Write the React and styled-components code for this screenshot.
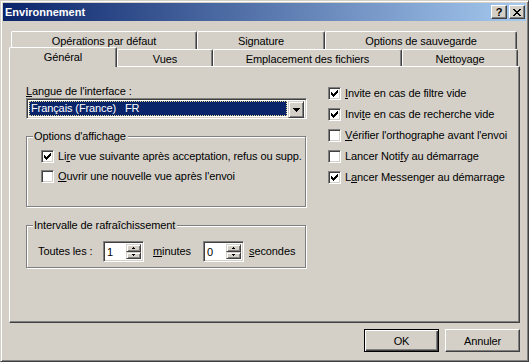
import React from "react";
import styled, { createGlobalStyle, css } from "styled-components";

const FACE = "#d4d0c8";

const backTabs = [
  { label: "Opérations par défaut", width: 186 },
  { label: "Signature", width: 128 },
  { label: "Options de sauvegarde", width: 192 },
];

const frontTabs = [
  { label: "Général", width: 108, active: true },
  { label: "Vues", width: 96 },
  { label: "Emplacement des fichiers", width: 189 },
  { label: "Nettoyage", width: 116 },
];

const rightOptions = [
  { pre: "", key: "I", post: "nvite en cas de filtre vide", checked: true },
  { pre: "Invi", key: "t", post: "e en cas de recherche vide", checked: true },
  { pre: "", key: "V", post: "érifier l'orthographe avant l'envoi", checked: false },
  { pre: "Lancer Noti", key: "f", post: "y au démarrage", checked: false },
  { pre: "L", key: "a", post: "ncer Messenger au démarrage", checked: true },
];

const GlobalStyle = createGlobalStyle`
  html, body {
    margin: 0;
    padding: 0;
    background: ${FACE};
  }
  body {
    font-family: "Liberation Sans", Arial, sans-serif;
    font-size: 11px;
    letter-spacing: -0.1px;
    color: #000;
  }
`;

const raised = css`
  border: 1px solid;
  border-color: #fff #404040 #404040 #fff;
  box-shadow: inset -1px -1px #808080;
`;

const sunken = css`
  border: 1px solid;
  border-color: #808080 #fff #fff #808080;
  box-shadow: inset 1px 1px #404040, inset -1px -1px ${FACE};
`;

const Window = styled.div`
  box-sizing: border-box;
  width: 529px;
  height: 362px;
  padding: 2px;
  background: ${FACE};
  border: 1px solid;
  border-color: ${FACE} #404040 #404040 ${FACE};
  box-shadow: inset 1px 1px #fff, inset -1px -1px #808080;
  display: flex;
  flex-direction: column;
`;

const TitleBar = styled.div`
  height: 18px;
  flex: none;
  display: flex;
  align-items: center;
  padding: 0 1px 0 2px;
  background: linear-gradient(to right, #0a246a, #a6caf0);
`;

const Title = styled.span`
  flex: 1;
  color: #fff;
  font-weight: bold;
  font-size: 11px;
  letter-spacing: 0;
  line-height: 18px;
`;

const TitleButton = styled.div`
  box-sizing: border-box;
  width: 16px;
  height: 14px;
  margin-left: 2px;
  background: ${FACE};
  ${raised};
  display: flex;
  align-items: center;
  justify-content: center;
  font-weight: bold;
  font-size: 11px;
  line-height: 12px;
`;

const Body = styled.div`
  flex: 1;
  display: flex;
  flex-direction: column;
  padding: 10px 6px 0 6px;
`;

const TabRow = styled.div`
  display: flex;
  align-items: flex-start;
  height: ${(p) => p.$h}px;
  padding-left: ${(p) => p.$indent}px;
`;

const Tab = styled.div`
  box-sizing: border-box;
  flex: none;
  width: ${(p) => p.$w}px;
  height: ${(p) => (p.$active ? p.$h + 3 : p.$h)}px;
  margin-top: ${(p) => (p.$active ? -2 : 0)}px;
  position: ${(p) => (p.$active ? "relative" : "static")};
  z-index: ${(p) => (p.$active ? 1 : 0)};
  background: ${FACE};
  border-top: 1px solid #fff;
  border-left: 1px solid #fff;
  border-right: 1px solid #404040;
  border-radius: 2px 2px 0 0;
  box-shadow: inset -1px 0 #808080;
  text-align: center;
  line-height: 13px;
  padding-top: 3px;
  white-space: nowrap;
`;

const Panel = styled.div`
  box-sizing: border-box;
  width: 511px;
  height: 257px;
  border: 1px solid;
  border-color: #fff #404040 #404040 #fff;
  box-shadow: inset -1px -1px #808080;
  display: flex;
  padding: 18px 0 0 16px;
  gap: 21px;
`;

const LeftCol = styled.div`
  width: 281px;
  display: flex;
  flex-direction: column;
`;

const RightCol = styled.div`
  display: flex;
  flex-direction: column;
  gap: 8px;
  padding-top: 2px;
`;

const Label = styled.div`
  line-height: 13px;
  height: 13px;
  white-space: nowrap;
`;

const Key = styled.span`
  text-decoration: underline;
`;

const Combo = styled.div`
  box-sizing: border-box;
  width: 281px;
  height: 21px;
  ${sunken};
  background: #fff;
  padding: 2px;
  display: flex;
`;

const Selection = styled.div`
  flex: 1;
  margin-right: 1px;
  background: #0a246a;
  color: #fff;
  line-height: 15px;
  padding-left: 2px;
  outline: 1px dotted #e8d890;
  outline-offset: -1px;
  white-space: pre;
`;

const DropButton = styled.div`
  box-sizing: border-box;
  width: 16px;
  height: 17px;
  background: ${FACE};
  border: 1px solid;
  border-color: ${FACE} #404040 #404040 ${FACE};
  box-shadow: inset 1px 1px #fff, inset -1px -1px #808080;
  display: flex;
  align-items: center;
  justify-content: center;
`;

const Group = styled.div`
  box-sizing: border-box;
  position: relative;
  width: 280px;
  height: ${(p) => p.$h}px;
  margin-top: ${(p) => p.$mt}px;
  border: 1px solid #808080;
  box-shadow: inset 1px 1px #fff, 1px 1px #fff;
  padding: ${(p) => p.$pad};
  display: flex;
  flex-direction: column;
  gap: 7px;
`;

const Legend = styled.span`
  position: absolute;
  top: -7px;
  left: 6px;
  padding: 0 2px 0 1px;
  background: ${FACE};
  line-height: 13px;
  white-space: nowrap;
`;

const CheckRow = styled.div`
  display: flex;
  align-items: center;
  height: 13px;
  gap: 4px;
  white-space: nowrap;
  line-height: 13px;
`;

const Box = styled.div`
  box-sizing: border-box;
  flex: none;
  width: 13px;
  height: 13px;
  ${sunken};
  background: #fff;
  position: relative;
`;

const CheckMark = styled.svg`
  position: absolute;
  left: 1px;
  top: 1px;
  display: block;
`;

const SpinRow = styled.div`
  display: flex;
  align-items: center;
  height: 21px;
  white-space: nowrap;
`;

const Cell = styled.div`
  flex: none;
  width: ${(p) => p.$w}px;
  margin-left: ${(p) => p.$ml || 0}px;
  line-height: 13px;
`;

const Spin = styled.div`
  box-sizing: border-box;
  flex: none;
  width: 41px;
  height: 21px;
  ${sunken};
  background: #fff;
  padding: 2px;
  display: flex;
`;

const SpinValue = styled.div`
  flex: 1;
  line-height: 16px;
  padding-left: 1px;
`;

const SpinButtons = styled.div`
  width: 15px;
  display: flex;
  flex-direction: column;
`;

const SpinBtn = styled.div`
  box-sizing: border-box;
  height: ${(p) => p.$h}px;
  background: ${FACE};
  border: 1px solid;
  border-color: ${FACE} #404040 #404040 ${FACE};
  box-shadow: inset 1px 1px #fff, inset -1px -1px #808080;
  display: flex;
  align-items: center;
  justify-content: center;
`;

const ButtonRow = styled.div`
  display: flex;
  justify-content: flex-end;
  gap: 6px;
  margin-top: 6px;
`;

const Button = styled.div`
  box-sizing: border-box;
  width: 75px;
  height: 23px;
  display: flex;
  align-items: center;
  justify-content: center;
  background: ${FACE};
  ${(p) =>
    p.$default
      ? css`
          border: 1px solid #000;
          box-shadow: inset 1px 1px #fff, inset -1px -1px #404040,
            inset -2px -2px #808080;
        `
      : raised};
`;

const Check = ({ checked }) => (
  <Box>
    {checked && (
      <CheckMark width="9" height="9" viewBox="0 0 9 9" shapeRendering="crispEdges">
        {[2, 3, 4, 3, 2, 1, 0].map((r, i) => (
          <rect key={i} x={1 + i} y={1 + r} width="1" height="3" fill="#000" />
        ))}
      </CheckMark>
    )}
  </Box>
);

// little black triangle, `size` rows tall
const Arrow = ({ size, up }) => (
  <svg width={size * 2 - 1} height={size} viewBox={`0 0 ${size * 2 - 1} ${size}`} shapeRendering="crispEdges">
    {Array.from({ length: size }).map((_, i) => {
      const row = up ? size - 1 - i : i;
      return <rect key={i} x={i} y={row} width={size * 2 - 1 - i * 2} height="1" fill="#000" />;
    })}
  </svg>
);

const CloseGlyph = () => (
  <svg width="8" height="7" viewBox="0 0 8 7" shapeRendering="crispEdges">
    {[0, 1, 2, 3, 4, 5, 6].map((i) => (
      <g key={i}>
        <rect x={i} y={i} width="2" height="1" fill="#000" />
        <rect x={6 - i} y={i} width="2" height="1" fill="#000" />
      </g>
    ))}
  </svg>
);

const Spinner = ({ value }) => (
  <Spin>
    <SpinValue>{value}</SpinValue>
    <SpinButtons>
      <SpinBtn $h={9}>
        <Arrow size={2} up />
      </SpinBtn>
      <SpinBtn $h={8}>
        <Arrow size={2} />
      </SpinBtn>
    </SpinButtons>
  </Spin>
);

export default function App() {
  return (
    <>
      <GlobalStyle />
      <Window>
        <TitleBar>
          <Title>Environnement</Title>
          <TitleButton>?</TitleButton>
          <TitleButton>
            <CloseGlyph />
          </TitleButton>
        </TitleBar>
        <Body>
          <TabRow $h={18} $indent={2}>
            {backTabs.map((t) => (
              <Tab key={t.label} $w={t.width} $h={18}>
                {t.label}
              </Tab>
            ))}
          </TabRow>
          <TabRow $h={17} $indent={0}>
            {frontTabs.map((t) => (
              <Tab key={t.label} $w={t.width} $h={17} $active={t.active}>
                {t.label}
              </Tab>
            ))}
          </TabRow>
          <Panel>
            <LeftCol>
              <Label>
                <Key>L</Key>angue de l'interface :
              </Label>
              <Combo>
                <Selection>Français (France)   FR</Selection>
                <DropButton>
                  <Arrow size={4} />
                </DropButton>
              </Combo>
              <Group $h={71} $mt={17} $pad="13px 0 0 14px">
                <Legend>Options d'affichage</Legend>
                <CheckRow>
                  <Check checked />
                  <span>
                    Li<Key>r</Key>e vue suivante après acceptation, refus ou supp.
                  </span>
                </CheckRow>
                <CheckRow>
                  <Check />
                  <span>
                    <Key>O</Key>uvrir une nouvelle vue après l'envoi
                  </span>
                </CheckRow>
              </Group>
              <Group $h={43} $mt={18} $pad="15px 0 0 11px">
                <Legend>Intervalle de rafraîchissement</Legend>
                <SpinRow>
                  <Cell $w={65}>Toutes les :</Cell>
                  <Spinner value="1" />
                  <Cell $w={50} $ml={9}>
                    <Key>m</Key>inutes
                  </Cell>
                  <Spinner value="0" />
                  <Cell $w={60} $ml={5}>
                    <Key>s</Key>econdes
                  </Cell>
                </SpinRow>
              </Group>
            </LeftCol>
            <RightCol>
              {rightOptions.map((o) => (
                <CheckRow key={o.post}>
                  <Check checked={o.checked} />
                  <span>
                    {o.pre}
                    <Key>{o.key}</Key>
                    {o.post}
                  </span>
                </CheckRow>
              ))}
            </RightCol>
          </Panel>
          <ButtonRow>
            <Button $default>OK</Button>
            <Button>Annuler</Button>
          </ButtonRow>
        </Body>
      </Window>
    </>
  );
}
